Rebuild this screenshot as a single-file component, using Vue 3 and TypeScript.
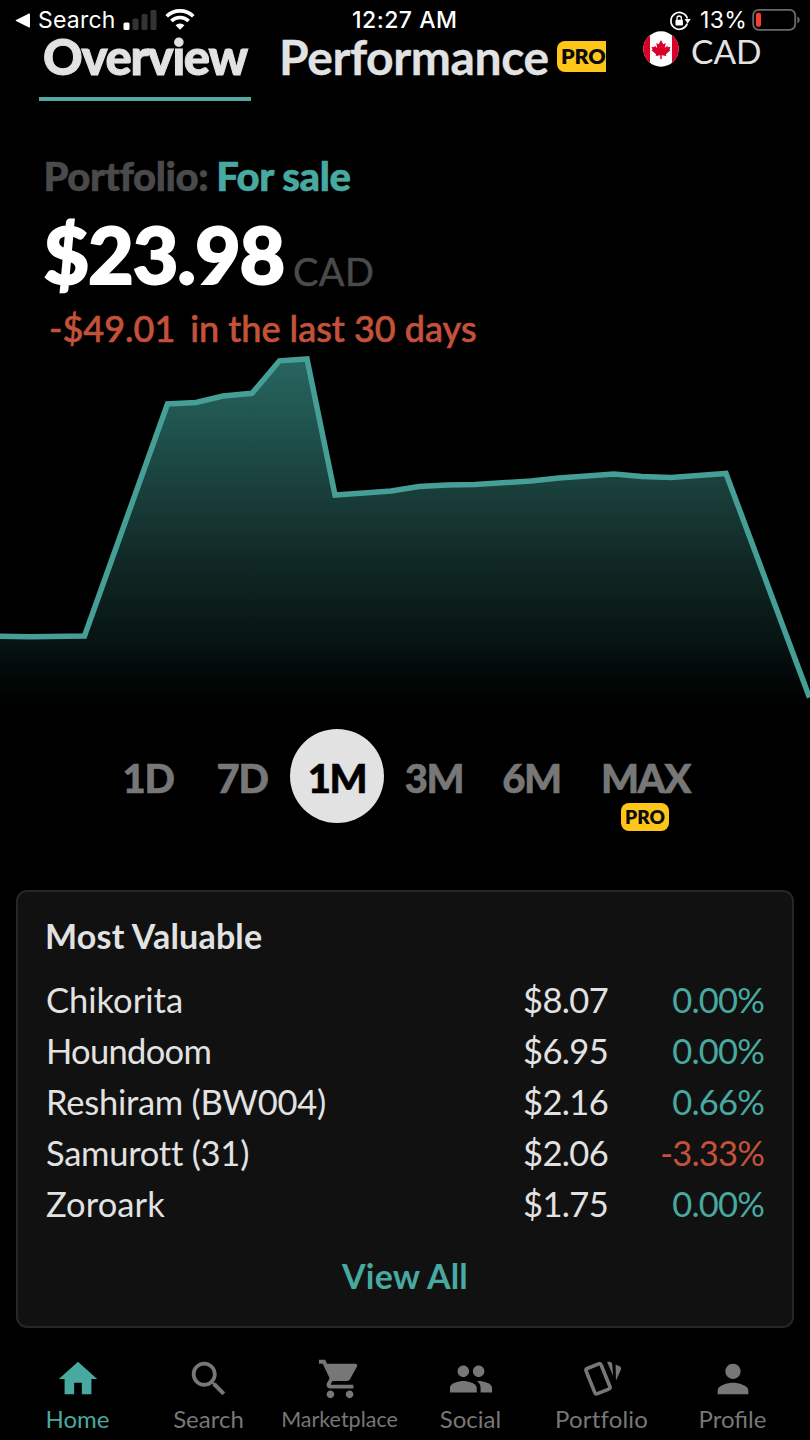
<script setup lang="ts">
interface Holding { name: string; price: string; change: string; tracking: number; down?: boolean }
interface Range { key: string; label: string; pro?: boolean }
interface NavItem { key: string; label: string; path?: string }

const holdings: Holding[] = [
  { name: 'Chikorita', price: '$8.07', change: '0.00%', tracking: 0 },
  { name: 'Houndoom', price: '$6.95', change: '0.00%', tracking: -0.7 },
  { name: 'Reshiram (BW004)', price: '$2.16', change: '0.66%', tracking: -0.25 },
  { name: 'Samurott (31)', price: '$2.06', change: '-3.33%', tracking: -0.25, down: true },
  { name: 'Zoroark', price: '$1.75', change: '0.00%', tracking: 0.1 },
]

const ranges: Range[] = [
  { key: 'd1', label: '1D' },
  { key: 'd7', label: '7D' },
  { key: 'm1', label: '1M' },
  { key: 'm3', label: '3M' },
  { key: 'm6', label: '6M' },
  { key: 'max', label: 'MAX', pro: true },
]
const activeRange = 'm1'

const nav: NavItem[] = [
  { key: 'home', label: 'Home', path: 'M10 20v-6h4v6h5v-8h3L12 3 2 12h3v8z' },
  { key: 'search', label: 'Search', path: 'M15.5 14h-.79l-.28-.27C15.41 12.59 16 11.11 16 9.5 16 5.91 13.09 3 9.5 3S3 5.91 3 9.5 5.91 16 9.5 16c1.61 0 3.09-.59 4.23-1.57l.27.28v.79l5 4.99L20.49 19l-4.99-5zm-6 0C7.01 14 5 11.99 5 9.5S7.01 5 9.5 5 14 7.01 14 9.5 11.99 14 9.5 14z' },
  { key: 'market', label: 'Marketplace', path: 'M7 18c-1.1 0-1.99.9-1.99 2S5.9 22 7 22s2-.9 2-2-.9-2-2-2zM1 2v2h2l3.6 7.59-1.35 2.45c-.16.28-.25.61-.25.96 0 1.1.9 2 2 2h12v-2H7.42c-.14 0-.25-.11-.25-.25l.03-.12.9-1.63h7.45c.75 0 1.41-.41 1.75-1.03l3.58-6.49c.08-.14.12-.31.12-.48 0-.55-.45-1-1-1H5.21l-.94-2H1zm16 16c-1.1 0-1.99.9-1.99 2s.89 2 1.99 2 2-.9 2-2-.9-2-2-2z' },
  { key: 'social', label: 'Social', path: 'M16 11c1.66 0 2.99-1.34 2.99-3S17.66 5 16 5c-1.66 0-3 1.34-3 3s1.34 3 3 3zm-8 0c1.66 0 2.99-1.34 2.99-3S9.66 5 8 5C6.34 5 5 6.34 5 8s1.34 3 3 3zm0 2c-2.33 0-7 1.17-7 3.5V19h14v-2.5c0-2.33-4.67-3.5-7-3.5zm8 0c-.29 0-.62.02-.97.05 1.16.84 1.97 1.97 1.97 3.45V19h6v-2.5c0-2.33-4.67-3.5-7-3.5z' },
  { key: 'portfolio', label: 'Portfolio' },
  { key: 'profile', label: 'Profile', path: 'M12 12c2.21 0 4-1.79 4-4s-1.79-4-4-4-4 1.79-4 4 1.79 4 4 4zm0 2c-2.67 0-8 1.34-8 4v2h16v-2c0-2.66-5.33-4-8-4z' },
]

const line: [number, number][] = [
  [-4, 286.3], [30, 286.8], [84.5, 286], [167.5, 54], [196, 52.5], [223, 46], [252, 43.3], [279.5, 10.8],
  [307, 9], [335, 145], [364, 143], [391, 141], [419, 136.6], [447, 135], [475, 134.6], [531, 131],
  [559, 128], [614, 124], [642, 126.5], [671, 127.4], [698, 125.5], [726, 123.5], [809.5, 347.5],
]
const points = line.map((p) => p.join(',')).join(' ')
const area = `-4,370 ${points} 809.5,370`
</script>

<template>
  <main class="screen">
    <div class="status">
      <div class="status-left">
        <svg class="back" width="16" height="15" viewBox="0 0 16 15"><path d="M15 1.2v12.6c0 .6-.5.9-1 .6L1 8.1q-.8-.6 0-1.2L14 .6c.5-.3 1 0 1 .6z" fill="#fff" /></svg>
        <span class="status-search">Search</span>
        <svg class="signal" width="35" height="22" viewBox="0 0 35 22">
          <rect x=".5" y="13.5" width="6" height="7.5" rx="1.5" fill="#fff" />
          <rect x="9.5" y="9.5" width="6" height="11.5" rx="1.5" fill="#333" />
          <rect x="18.5" y="5" width="6" height="16" rx="1.5" fill="#333" />
          <rect x="27.5" y="1" width="6" height="20" rx="1.5" fill="#333" />
        </svg>
        <svg class="wifi" width="30" height="22" viewBox="0 0 30 22">
          <g fill="none" stroke="#fff" stroke-width="3.7">
            <path d="M1.7 8.3a19 19 0 0 1 26.6 0" />
            <path d="M6.4 13a12.3 12.3 0 0 1 17.2 0" />
          </g>
          <path d="M15 21.7l-4.5-4.5a6.5 6.5 0 0 1 9 0z" fill="#fff" />
        </svg>
      </div>
      <span class="clock">12:27 AM</span>
      <div class="status-right">
        <svg class="lock" width="22" height="20" viewBox="0 0 22 20">
          <path d="M18.3 12.5A8.4 8.4 0 1 1 18.4 7.5" fill="none" stroke="#fff" stroke-width="1.7" />
          <path d="M15.5 8h6.3l-3.2 4.6z" fill="#fff" />
          <rect x="6.5" y="8.8" width="7.4" height="5.7" rx=".8" fill="#fff" />
          <path d="M8 9V7.2a2.2 2.2 0 0 1 4.4 0V9" fill="none" stroke="#fff" stroke-width="1.3" />
        </svg>
        <span class="percent">13%</span>
        <svg class="battery" width="48" height="24" viewBox="0 0 48 24">
          <rect x="1.2" y="1.8" width="42" height="20" rx="5.5" fill="none" stroke="#6a6a6a" stroke-width="1.8" />
          <rect x="4" y="4.8" width="5" height="14" rx="2" fill="#ff3b30" />
          <path d="M45.4 8.3q2.3 1 2.3 3.5t-2.3 3.5z" fill="#6a6a6a" />
        </svg>
      </div>
    </div>

    <header class="header">
      <div class="tab tab-active"><span class="overview">Overview</span></div>
      <div class="tab performance">Performance</div>
      <span class="pro-tag pro-clipped">PRO</span>
      <div class="currency">
        <svg class="flag" width="36" height="36" viewBox="0 0 36 36">
          <defs><clipPath id="flag-circle"><circle cx="18" cy="18" r="17.7" /></clipPath></defs>
          <g clip-path="url(#flag-circle)">
            <rect width="36" height="36" fill="#fff" />
            <rect width="7" height="36" fill="#d80027" />
            <rect x="29" width="7" height="36" fill="#d80027" />
            <path d="M18 9l2.300 4.200 2.400-1.200-.9 5 2.400-2.300.6 1.600 2.700-.5-1 2.600 1 .9-4.600 3.900.5 1.700-4.700-.6.1 3.700h-1.600l.1-3.700-4.700.6.500-1.700-4.600-3.900 1-.9-1-2.600 2.700.5.600-1.600 2.400 2.300-.9-5 2.400 1.200z" fill="#d80027" />
          </g>
        </svg>
        <span class="currency-code">CAD</span>
      </div>
    </header>

    <section class="summary">
      <div class="portfolio-name"><span class="muted">Portfolio:</span><span class="name">For sale</span></div>
      <div class="total"><span class="amount">$23.98</span><span class="unit">CAD</span></div>
      <div class="delta"><span class="delta-value">-$49.01</span><span>in the last 30 days</span></div>
    </section>

    <svg class="chart" width="810" height="370" viewBox="0 0 810 370">
      <defs>
        <linearGradient id="fade" gradientUnits="userSpaceOnUse" x1="0" y1="0" x2="0" y2="360">
          <stop offset="0" stop-color="#296861" />
          <stop offset=".2" stop-color="#20544f" />
          <stop offset=".4" stop-color="#193d39" />
          <stop offset=".6" stop-color="#102724" />
          <stop offset=".8" stop-color="#071513" />
          <stop offset=".92" stop-color="#020706" />
          <stop offset="1" stop-color="#000" />
        </linearGradient>
      </defs>
      <polygon :points="area" fill="url(#fade)" />
      <polyline :points="points" fill="none" stroke="#459f96" stroke-width="5.5" stroke-linejoin="miter" />
    </svg>

    <div class="ranges">
      <button v-for="r in ranges" :key="r.key" class="range" :class="[r.key, { selected: r.key === activeRange }]">
        <span class="range-label">{{ r.label }}</span>
        <span v-if="r.pro" class="pro-tag pro-small">PRO</span>
      </button>
    </div>

    <section class="card">
      <h2 class="card-title">Most Valuable</h2>
      <div v-for="h in holdings" :key="h.name" class="row">
        <span class="row-name" :style="{ letterSpacing: h.tracking + 'px' }">{{ h.name }}</span>
        <span class="price">{{ h.price }}</span>
        <span class="change" :class="{ down: h.down }">{{ h.change }}</span>
      </div>
      <div class="view-all"><span>View All</span></div>
    </section>

    <nav class="nav">
      <div v-for="n in nav" :key="n.key" class="nav-item" :class="n.key">
        <svg v-if="n.path" class="nav-icon" viewBox="0 0 24 24"><path :d="n.path" fill="currentColor" /></svg>
        <svg v-else class="nav-icon" viewBox="0 0 46 46">
          <rect x="-8.1" y="-13.6" width="16.2" height="27.2" rx="2" transform="translate(19 22.8) rotate(-22)" fill="none" stroke="currentColor" stroke-width="3.6" />
          <path d="M28 5.800h3q2 .3 2.200 2.500l.9 11.700z" fill="currentColor" />
          <path d="M36.600 8.500l4.400 2q1.700 1 1 3l-5 11z" fill="currentColor" />
        </svg>
        <span class="nav-label">{{ n.label }}</span>
      </div>
    </nav>
  </main>
</template>

<style>
html, body { margin: 0; background: #000; }
</style>

<style scoped>
.screen {
  width: 810px;
  height: 1440px;
  overflow: hidden;
  display: flex;
  flex-direction: column;
  background: #000;
  color: #e2e2e2;
  font-family: Lato, "Liberation Sans", sans-serif;
  white-space: nowrap;
}
svg { display: block; flex: none; }

.status {
  height: 36px;
  box-sizing: border-box;
  padding: 5px 10px 0 15px;
  display: grid;
  grid-template-columns: 337px 1fr auto;
  align-items: center;
  font: 500 23px/31px Inter, sans-serif;
  color: #fff;
}
.status-left, .status-right { display: flex; align-items: center; }
.status-search { font-weight: 400; font-size: 23px; margin-left: 7px; width: 85px; letter-spacing: .2px; }
.signal { margin-top: -2px; }
.wifi { margin-left: 7px; margin-top: -3px; }
.clock { letter-spacing: .5px; }
.percent { font-weight: 400; margin-left: 9px; width: 52px; letter-spacing: .3px; }
.battery { margin-top: -2px; }

.header { height: 65px; display: flex; align-items: flex-start; }
.tab { height: 65px; box-sizing: border-box; line-height: 41px; font-size: 50px; }
.tab-active {
  margin-left: 39px;
  width: 212px;
  padding-left: 4px;
  border-bottom: 4px solid #55a9a1;
}
.overview { font-size: 49px; font-weight: 900; letter-spacing: -1.3px; -webkit-text-stroke: 1px currentColor; }
.performance { font-weight: 700; font-size: 48px; margin-left: 28px; width: 278px; letter-spacing: -.4px; -webkit-text-stroke: .3px currentColor; }
.pro-tag { background: #ffc61a; color: #0b0b0b; font-weight: 800; }
.pro-clipped {
  width: 49px;
  height: 31px;
  margin-top: 5px;
  padding-left: 4px;
  box-sizing: border-box;
  overflow: hidden;
  border-radius: 8px 0 0 8px;
  font-size: 21.5px;
  line-height: 31px;
  letter-spacing: -.2px;
}
.currency { display: flex; margin-left: 37px; }
.flag { margin-top: -5px; }
.currency-code { font-size: 33.5px; line-height: 31px; margin-left: 12px; }

.summary { height: 249px; display: flex; flex-direction: column; }
.portfolio-name { margin-top: 51px; height: 48px; line-height: 49px; font-size: 40px; font-weight: 900; padding-left: 43.500px; letter-spacing: -.4px; -webkit-text-stroke: .6px currentColor; }
.muted { color: #4a4a4a; }
.name { color: #48a9a0; margin-left: 8px; }
.total { height: 104px; padding-left: 43.500px; display: flex; align-items: baseline; line-height: 108px; }
.amount { font-size: 79px; font-weight: 900; letter-spacing: -1.2px; color: #fff; width: 249.500px; -webkit-text-stroke: 1.8px currentColor; }
.unit { font-size: 38px; color: #4a4a4a; letter-spacing: .4px; position: relative; top: 2px; -webkit-text-stroke: .5px currentColor; }
.delta { height: 46px; line-height: 46px; margin-top: 1px; padding-left: 49px; font-size: 36px; font-weight: 500; color: #c4523a; -webkit-text-stroke: .6px currentColor; }
.delta-value { margin-right: 15px; }

.chart { height: 370px; }

.ranges { height: 170px; display: flex; padding-left: 101px; }
.range {
  position: relative;
  height: 112px;
  padding: 0;
  border: 0;
  background: none;
  color: #777;
  font: 900 40px/112px Lato, sans-serif;
  letter-spacing: -1.4px;
  -webkit-text-stroke: .6px currentColor;
  display: flex;
  justify-content: center;
  align-items: center;
}
.d1, .d7 { width: 94px; }
.m1 { width: 96px; }
.m3 { width: 98px; }
.m6 { width: 97px; }
.max { width: 131px; }
.range-label { display: block; padding-top: 3px; }
.selected .range-label {
  width: 94px;
  height: 94px;
  box-sizing: border-box;
  line-height: 94px;
  border-radius: 50%;
  background: #e2e2e2;
  color: #000;
  text-align: center;
  padding-top: 2px;
}
.pro-small {
  position: absolute;
  left: 41px;
  top: 83px;
  width: 48px;
  height: 28px;
  border-radius: 8px;
  font-size: 19px;
  line-height: 28px;
  text-align: center;
  letter-spacing: 0;
  -webkit-text-stroke: 0;
}

.card {
  height: 438px;
  margin: 0 16px;
  box-sizing: border-box;
  border: 2px solid #262626;
  border-radius: 11px;
  background: #111;
  padding: 24px 28px 0;
  font-size: 34.5px;
}
.card-title { margin: 0 0 18px -1px; font-size: 34px; line-height: 40px; font-weight: 700; letter-spacing: .2px; }
.row { display: grid; grid-template-columns: 477px 100px 1fr; line-height: 51px; height: 51px; font-variant-ligatures: none; }
.price { letter-spacing: -.6px; }
.change { text-align: right; color: #48a9a0; letter-spacing: -.8px; }
.change.down { color: #c4523a; }
.view-all { margin-top: 27px; line-height: 40px; font-weight: 700; font-size: 34px; letter-spacing: .2px; color: #48a9a0; text-align: center; }

.nav { display: flex; padding: 28px 12px 0; color: #777; }
.nav-item { width: 131px; display: flex; flex-direction: column; align-items: center; }
.nav-item.home { color: #48a9a0; }
.nav-icon { width: 46px; height: 46px; }
.nav-label { margin-top: 1px; font-size: 24px; line-height: 32px; }
.market .nav-label { font-size: 21.5px; }
.portfolio .nav-label { font-variant-ligatures: none; letter-spacing: .2px; }
</style>
